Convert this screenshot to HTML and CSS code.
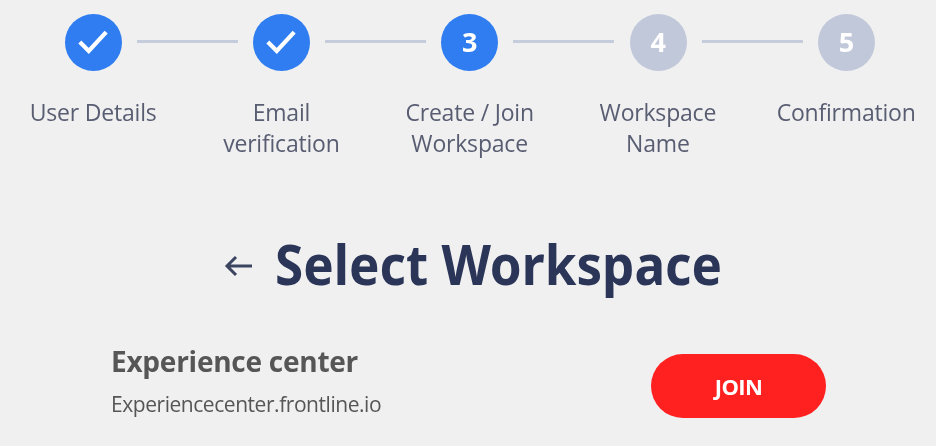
FILE: index.html
```html
<!DOCTYPE html>
<html lang="en">
<head>
<meta charset="utf-8">
<title>Select Workspace</title>
<link rel="stylesheet" href="styles.css">
</head>
<body>
<main class="page">
  <div class="track">
    <span class="dot dot-on"><svg class="check" viewBox="0 0 34 28"><path d="M3 14.5 L12.5 24 L31 4"/></svg></span>
    <span class="line"></span>
    <span class="dot dot-on"><svg class="check" viewBox="0 0 34 28"><path d="M3 14.5 L12.5 24 L31 4"/></svg></span>
    <span class="line"></span>
    <span class="dot dot-on">3</span>
    <span class="line"></span>
    <span class="dot dot-off">4</span>
    <span class="line"></span>
    <span class="dot dot-off">5</span>
  </div>
  <div class="labels">
    <div class="label">User Details</div>
    <div class="label">Email<br>verification</div>
    <div class="label">Create / Join<br>Workspace</div>
    <div class="label">Workspace<br>Name</div>
    <div class="label">Confirmation</div>
  </div>
  <div class="title-row">
    <svg class="back" viewBox="0 0 30 24"><path d="M28 12 H3 M12 3 L3 12 L12 21"/></svg>
    <h1 class="title">Select Workspace</h1>
  </div>
  <div class="workspace">
    <div class="info">
      <div class="name">Experience center</div>
      <div class="url">Experiencecenter.frontline.io</div>
    </div>
    <button class="join">JOIN</button>
  </div>
</main>
</body>
</html>
```
FILE: styles.css
```css
* { box-sizing: border-box; }
html, body { margin: 0; height: 100%; }
body { background: #f0f0f0; overflow: hidden; }
.page { width: 936px; height: 446px; filter: blur(0.5px); font-family: "Open Sans", sans-serif; }
.track { display: flex; align-items: flex-start; gap: 15.2px; padding: 14px 0 0 64.5px; height: 71px; }
.dot { flex: none; width: 57px; height: 57px; border-radius: 50%; display: flex; align-items: center; justify-content: center; color: #fff; font-weight: 700; font-size: 27px; line-height: 1; padding-bottom: 3px; }
.dot-on { background: #2f7df0; }
.dot-off { background: #c1c8da; }
.check { width: 32px; height: 27px; fill: none; stroke: #fff; stroke-width: 4.5; }
.line { flex: none; width: 101px; height: 3px; margin-top: 26px; background: #c5ccdc; }
.labels { display: grid; grid-template-columns: repeat(5, 188.25px); margin: 26px 0 0 -1px; height: 62px; }
.label { text-align: center; font-size: 23px; line-height: 31px; color: #585d72; letter-spacing: -0.2px; white-space: nowrap; }
.title-row { display: flex; align-items: center; gap: 21px; padding: 50px 0 0 224px; height: 160px; }
.back { flex: none; width: 30px; height: 24px; fill: none; stroke: #3b4560; stroke-width: 3; margin-top: 4px; }
.title { margin: 0; font-size: 55px; line-height: 60px; font-weight: 700; color: #2a3558; font-family: "Noto Sans", sans-serif; white-space: nowrap; transform: scaleX(0.93); transform-origin: left center; }
.workspace { display: flex; justify-content: space-between; align-items: flex-start; padding: 0 110px 0 111px; margin-top: 24px; }
.name { font-size: 28px; line-height: 36px; font-weight: 700; color: #565656; font-family: "Open Sans", sans-serif; letter-spacing: -0.25px; white-space: nowrap; }
.url { font-size: 21px; line-height: 28px; margin-top: 11px; color: #565656; letter-spacing: -0.45px; white-space: nowrap; }
.join { width: 175px; height: 64px; margin-top: 11px; border: 0; border-radius: 32px; background: #ff2020; color: #fff; font-family: "Open Sans", sans-serif; font-weight: 700; font-size: 22px; letter-spacing: -0.6px; padding: 0; }
```
